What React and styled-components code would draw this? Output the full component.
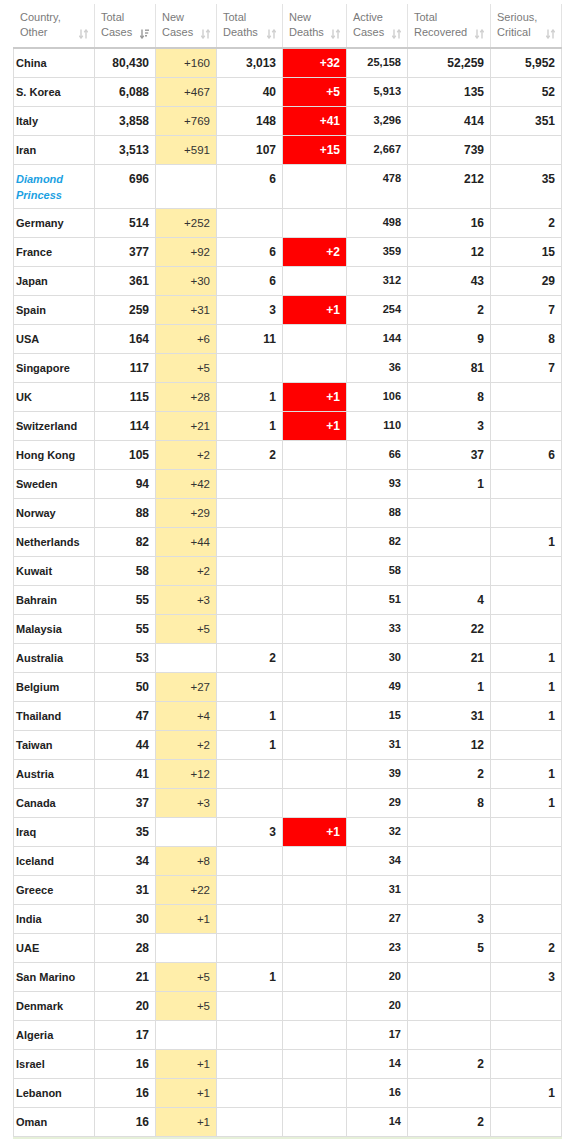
import React from "react";
import styled, { createGlobalStyle, css } from "styled-components";

const Global = createGlobalStyle`
  html, body { margin: 0; padding: 0; background: #fff; }
  body { font-family: "Liberation Sans", Arial, sans-serif; color: #222; }
`;

const COLS = "82px 61px 61px 66px 64px 61px 83px 71px";

const Table = styled.div`
  width: 549px;
  margin: 4px 0 0 13px;
`;

const HeadRow = styled.div`
  display: grid;
  grid-template-columns: ${COLS};
  height: 43px;
  border-bottom: 2px solid #cbcbcb;
`;

const HeadCell = styled.div`
  position: relative;
  box-sizing: border-box;
  border-right: 1px solid #e3e3e3;
  border-left: ${(p) => (p.$first ? "1px solid transparent" : "0")};
  padding: 6px 6px 0 6px;
  font-size: 11px;
  line-height: 15px;
  color: #7a7a7a;
`;

const SortIcon = styled.svg`
  position: absolute;
  right: 6px;
  bottom: 8px;
`;

const Row = styled.div`
  display: grid;
  grid-template-columns: ${COLS};
  min-height: ${(p) => (p.$tall ? "44px" : "29px")};
`;

const Cell = styled.div`
  box-sizing: border-box;
  min-height: 29px;
  border-right: 1px solid #dddddd;
  border-bottom: 1px solid #dddddd;
  border-left: ${(p) => (p.$first ? "1px solid #dddddd" : "0")};
  padding: 6px 6px 5px 6px;
  font-size: 12px;
  line-height: 16px;
  font-weight: bold;
  text-align: right;
  color: #222;
  ${(p) =>
    p.$first &&
    css`
      text-align: left;
      padding-left: 2px;
      font-size: 11px;
    `}
  ${(p) =>
    p.$small &&
    css`
      font-size: 11px;
      line-height: 14px;
    `}
  ${(p) =>
    p.$newCase &&
    css`
      background: #ffeeaa;
      font-weight: normal;
      color: #333;
      font-size: 11.5px;
    `}
  ${(p) =>
    p.$newDeath &&
    css`
      background: #ff0000;
      color: #fff;
    `}
`;

const Special = styled.span`
  color: #1ba1e2;
  font-style: italic;
`;

const Footer = styled.div`
  height: 2px;
  background: #e6f0d9;
`;

const Arrows = () => (
  <SortIcon width="9" height="10" viewBox="0 0 9 10">
    <g stroke="#cfcfcf" strokeWidth="1.4" fill="none">
      <path d="M2 0.5 V9" />
      <path d="M0.3 6.8 L2 9 L3.7 6.8" />
      <path d="M7 9.5 V1" />
      <path d="M5.3 3.2 L7 1 L8.7 3.2" />
    </g>
  </SortIcon>
);

const ActiveArrows = () => (
  <SortIcon width="9" height="10" viewBox="0 0 9 10">
    <g stroke="#9a9a9a" strokeWidth="1.4" fill="none">
      <path d="M2 0.5 V9" />
      <path d="M0.3 6.8 L2 9 L3.7 6.8" />
      <path d="M5 1.2 H9" />
      <path d="M5 4 H8.2" />
      <path d="M5 6.8 H7" />
    </g>
  </SortIcon>
);

const headers = [
  ["Country,", "Other"],
  ["Total", "Cases"],
  ["New", "Cases"],
  ["Total", "Deaths"],
  ["New", "Deaths"],
  ["Active", "Cases"],
  ["Total", "Recovered"],
  ["Serious,", "Critical"],
];

const data = [
  ["China", "80,430", "+160", "3,013", "+32", "25,158", "52,259", "5,952"],
  ["S. Korea", "6,088", "+467", "40", "+5", "5,913", "135", "52"],
  ["Italy", "3,858", "+769", "148", "+41", "3,296", "414", "351"],
  ["Iran", "3,513", "+591", "107", "+15", "2,667", "739", ""],
  ["Diamond Princess", "696", "", "6", "", "478", "212", "35", true],
  ["Germany", "514", "+252", "", "", "498", "16", "2"],
  ["France", "377", "+92", "6", "+2", "359", "12", "15"],
  ["Japan", "361", "+30", "6", "", "312", "43", "29"],
  ["Spain", "259", "+31", "3", "+1", "254", "2", "7"],
  ["USA", "164", "+6", "11", "", "144", "9", "8"],
  ["Singapore", "117", "+5", "", "", "36", "81", "7"],
  ["UK", "115", "+28", "1", "+1", "106", "8", ""],
  ["Switzerland", "114", "+21", "1", "+1", "110", "3", ""],
  ["Hong Kong", "105", "+2", "2", "", "66", "37", "6"],
  ["Sweden", "94", "+42", "", "", "93", "1", ""],
  ["Norway", "88", "+29", "", "", "88", "", ""],
  ["Netherlands", "82", "+44", "", "", "82", "", "1"],
  ["Kuwait", "58", "+2", "", "", "58", "", ""],
  ["Bahrain", "55", "+3", "", "", "51", "4", ""],
  ["Malaysia", "55", "+5", "", "", "33", "22", ""],
  ["Australia", "53", "", "2", "", "30", "21", "1"],
  ["Belgium", "50", "+27", "", "", "49", "1", "1"],
  ["Thailand", "47", "+4", "1", "", "15", "31", "1"],
  ["Taiwan", "44", "+2", "1", "", "31", "12", ""],
  ["Austria", "41", "+12", "", "", "39", "2", "1"],
  ["Canada", "37", "+3", "", "", "29", "8", "1"],
  ["Iraq", "35", "", "3", "+1", "32", "", ""],
  ["Iceland", "34", "+8", "", "", "34", "", ""],
  ["Greece", "31", "+22", "", "", "31", "", ""],
  ["India", "30", "+1", "", "", "27", "3", ""],
  ["UAE", "28", "", "", "", "23", "5", "2"],
  ["San Marino", "21", "+5", "1", "", "20", "", "3"],
  ["Denmark", "20", "+5", "", "", "20", "", ""],
  ["Algeria", "17", "", "", "", "17", "", ""],
  ["Israel", "16", "+1", "", "", "14", "2", ""],
  ["Lebanon", "16", "+1", "", "", "16", "", "1"],
  ["Oman", "16", "+1", "", "", "14", "2", ""],
];

export default function App() {
  return (
    <>
      <Global />
      <Table>
        <HeadRow>
          {headers.map((h, i) => (
            <HeadCell key={i} $first={i === 0}>
              {h[0]}
              <br />
              {h[1]}
              {i === 1 ? <ActiveArrows /> : <Arrows />}
            </HeadCell>
          ))}
        </HeadRow>
        {data.map((r) => (
          <Row key={r[0]} $tall={!!r[8]}>
            <Cell $first>
              {r[8] ? (
                <Special>
                  Diamond
                  <br />
                  Princess
                </Special>
              ) : (
                r[0]
              )}
            </Cell>
            <Cell>{r[1]}</Cell>
            <Cell $newCase={!!r[2]}>{r[2]}</Cell>
            <Cell>{r[3]}</Cell>
            <Cell $newDeath={!!r[4]}>{r[4]}</Cell>
            <Cell $small>{r[5]}</Cell>
            <Cell>{r[6]}</Cell>
            <Cell>{r[7]}</Cell>
          </Row>
        ))}
        <Footer />
      </Table>
    </>
  );
}
